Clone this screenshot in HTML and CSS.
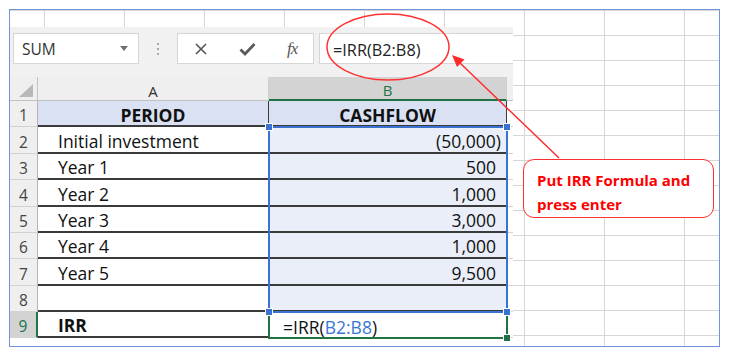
FILE: index.html
```html
<!DOCTYPE html>
<html lang="en">
<head>
  <meta charset="UTF-8">
  <title>IRR formula</title>
  <link rel="stylesheet" href="styles.css">
</head>
<body>
  <div class="frame">
    <div class="snip">
      <div class="toolbar">
        <div class="namebox"><span>SUM</span><span class="caret"></span></div>
        <div class="grip"><i></i><i></i><i></i></div>
        <div class="btnbox">
          <svg width="14" height="14" viewBox="0 0 14 14"><path d="M2 2 L12 12 M12 2 L2 12" stroke="#5a5a5a" stroke-width="1.7" fill="none"/></svg>
          <svg width="17" height="14" viewBox="0 0 17 14"><path d="M1.5 7.5 L6 12 L15.5 2" stroke="#5a5a5a" stroke-width="2.8" fill="none"/></svg>
          <span class="fx">fx</span>
        </div>
        <div class="formula">=IRR(B2:B8)</div>
      </div>

      <div class="sheet">
        <div class="corner"><span class="tri"></span></div>
        <div class="colhead">A</div>
        <div class="colhead sel">B</div>
        <div class="colhead rest"></div>

        <div class="rowhead">1</div>
        <div class="cell title a">PERIOD</div>
        <div class="cell title b">CASHFLOW</div>
        <div class="cell rest"></div>

        <div class="rowhead">2</div>
        <div class="cell a">Initial investment</div>
        <div class="cell num"><span class="neg">(50,000)</span></div>
        <div class="cell rest"></div>

        <div class="rowhead">3</div>
        <div class="cell a">Year 1</div>
        <div class="cell num">500</div>
        <div class="cell rest"></div>

        <div class="rowhead">4</div>
        <div class="cell a">Year 2</div>
        <div class="cell num">1,000</div>
        <div class="cell rest"></div>

        <div class="rowhead">5</div>
        <div class="cell a">Year 3</div>
        <div class="cell num">3,000</div>
        <div class="cell rest"></div>

        <div class="rowhead">6</div>
        <div class="cell a">Year 4</div>
        <div class="cell num">1,000</div>
        <div class="cell rest"></div>

        <div class="rowhead">7</div>
        <div class="cell a">Year 5</div>
        <div class="cell num">9,500</div>
        <div class="cell rest"></div>

        <div class="rowhead">8</div>
        <div class="cell a"></div>
        <div class="cell num"></div>
        <div class="cell rest"></div>

        <div class="rowhead on">9</div>
        <div class="cell a strong">IRR</div>
        <div class="cell active">=IRR(<span class="ref">B2:B8</span>)<span class="fill"></span></div>
        <div class="cell rest"></div>

        <div class="range">
          <span class="handle tl"></span><span class="handle tr"></span>
          <span class="handle bl"></span><span class="handle br"></span>
        </div>
      </div>
    </div>

    <svg class="marks" width="709" height="336">
      <ellipse cx="378" cy="37" rx="61" ry="33" fill="none" stroke="#ff3232" stroke-width="1.5"/>
      <line x1="549" y1="148" x2="450" y2="53" stroke="#ff2a2a" stroke-width="1.4"/>
      <polygon points="442,45 454.5,49.5 447,57" fill="#ff2a2a"/>
    </svg>

    <div class="callout">Put IRR Formula and<br>press enter</div>
  </div>
</body>
</html>
```

FILE: styles.css
```css
/* base */
body { margin: 0; background: #fff; font-family: "Open Sans", "Liberation Sans", sans-serif; }

/* outer frame with the background sheet grid */
.frame {
  position: relative;
  width: 711px;
  height: 338px;
  margin: 9px;
  box-sizing: border-box;
  border: 1px solid #6f95d6;
  background:
    linear-gradient(to right, #d6d6d6 1px, transparent 1px) 34px 0 / 80px 100%,
    linear-gradient(to bottom, #d6d6d6 1px, transparent 1px) 0 25px / 100% 25px,
    #fff;
}

/* pasted excel snippet */
.snip {
  position: absolute;
  left: 0;
  top: 17px;
  bottom: 0;
  width: 503px;
  background: #fff;
}

/* formula bar */
.toolbar {
  display: flex;
  align-items: flex-start;
  height: 50px;
  box-sizing: border-box;
  padding: 6px 0 0 3px;
  background: #f1f1f1;
}
.namebox {
  width: 126px;
  height: 31px;
  box-sizing: border-box;
  border: 1px solid #d6d6d6;
  background: #fff;
  display: flex;
  align-items: center;
  justify-content: space-between;
  padding: 0 10px 0 8px;
  font-size: 15.5px;
  color: #333;
}
.caret { border-left: 4px solid transparent; border-right: 4px solid transparent; border-top: 5px solid #707070; }
.grip {
  width: 38px;
  height: 31px;
  display: flex;
  flex-direction: column;
  align-items: center;
  justify-content: center;
  gap: 3px;
}
.grip i { width: 2px; height: 2px; background: #a8a8a8; }
.btnbox {
  width: 137px;
  height: 31px;
  box-sizing: border-box;
  border: 1px solid #d6d6d6;
  background: #fff;
  display: flex;
  align-items: center;
  justify-content: space-around;
}
.fx { font-family: "Liberation Serif", serif; font-style: italic; font-size: 17px; color: #555; letter-spacing: -1px; }
.formula {
  flex: 1;
  height: 31px;
  margin-left: 5px;
  box-sizing: border-box;
  border: 1px solid #d6d6d6;
  border-right: 0;
  background: #fff;
  display: flex;
  align-items: center;
  padding: 2px 0 0 13px;
  font-size: 16.3px;
  color: #222;
}

/* sheet */
.sheet {
  position: relative;
  display: grid;
  grid-template-columns: 28px 231px 238px 1fr;
  grid-template-rows: 24px 26px 27px 26px 27px 26px 26px 27px 26px 26px;
}
.corner {
  background: #efefef;
  border-right: 1px solid #c2c2c2;
  border-bottom: 1px solid #c2c2c2;
  display: flex;
  align-items: flex-end;
  justify-content: flex-end;
  padding: 0 4px 3px 0;
}
.tri { width: 14px; height: 13px; background: #b8b8b8; clip-path: polygon(100% 0, 100% 100%, 0 100%); }
.colhead {
  background: #efefef;
  border-bottom: 1px solid #c2c2c2;
  border-right: 1px solid #d0d0d0;
  display: flex;
  align-items: center;
  justify-content: center;
  padding-top: 4px;
  font-size: 15px;
  color: #333;
}
.colhead.sel { background: #d3d3d3; color: #217346; border-bottom: 2px solid #217346; }
.colhead.rest { border-right: 0; }

.rowhead {
  background: #efefef;
  border-right: 1px solid #b5b5b5;
  border-bottom: 1px solid #d2d2d2;
  display: flex;
  align-items: center;
  justify-content: center;
  padding-top: 3px;
  font-size: 15.5px;
  color: #444;
}
.rowhead.on { background: #d3d3d3; color: #217346; border-right: 2px solid #217346; }

.cell {
  border-bottom: 2px solid #3a3a3a;
  display: flex;
  align-items: center;
  padding: 2px 0 0 20px;
  font-size: 17.5px;
  color: #111;
  white-space: nowrap;
}
.cell.a { border-right: 1px solid #3a3a3a; }
.cell.title { background: #d9e1f2; font-weight: 700; justify-content: center; padding: 3px 0 0; }
.cell.b { border-right: 1px solid #3a3a3a; }
.cell.strong { font-weight: 700; }
.cell.num { background: #e9eef8; justify-content: flex-end; padding: 2px 11px 0 0; }
.neg { margin-right: -5px; }
.cell.rest { border-bottom: 1px solid #d4d4d4; padding: 0; }

/* active cell B9 */
.cell.active {
  position: relative;
  margin: -1px;
  border: 2px solid #217346;
  padding: 3px 0 0 13px;
  background: #fff;
}
.ref { color: #3a76d3; }
.fill { position: absolute; right: -5px; bottom: -5px; width: 6px; height: 6px; background: #217346; border: 1px solid #fff; }

/* referenced range B2:B8 */
.range {
  position: absolute;
  grid-column: 3 / 4;
  grid-row: 3 / 10;
  inset: -1px;
  border: 2px solid #3a72d2;
  pointer-events: none;
}
.handle { position: absolute; width: 6px; height: 6px; background: #3a72d2; border: 1px solid #fff; }
.tl { left: -5px; top: -5px; }
.tr { right: -5px; top: -5px; }
.bl { left: -5px; bottom: -5px; }
.br { right: -5px; bottom: -5px; }

/* annotations */
.marks { position: absolute; left: 0; top: 0; overflow: visible; pointer-events: none; }
.callout {
  position: absolute;
  left: 513px;
  top: 149px;
  width: 191px;
  height: 59px;
  box-sizing: border-box;
  border: 1.5px solid #ff3030;
  border-radius: 11px;
  background: #fff;
  padding: 8px 0 0 13px;
  font-size: 15px;
  line-height: 24px;
  font-weight: 700;
  color: #ff0000;
}
```
